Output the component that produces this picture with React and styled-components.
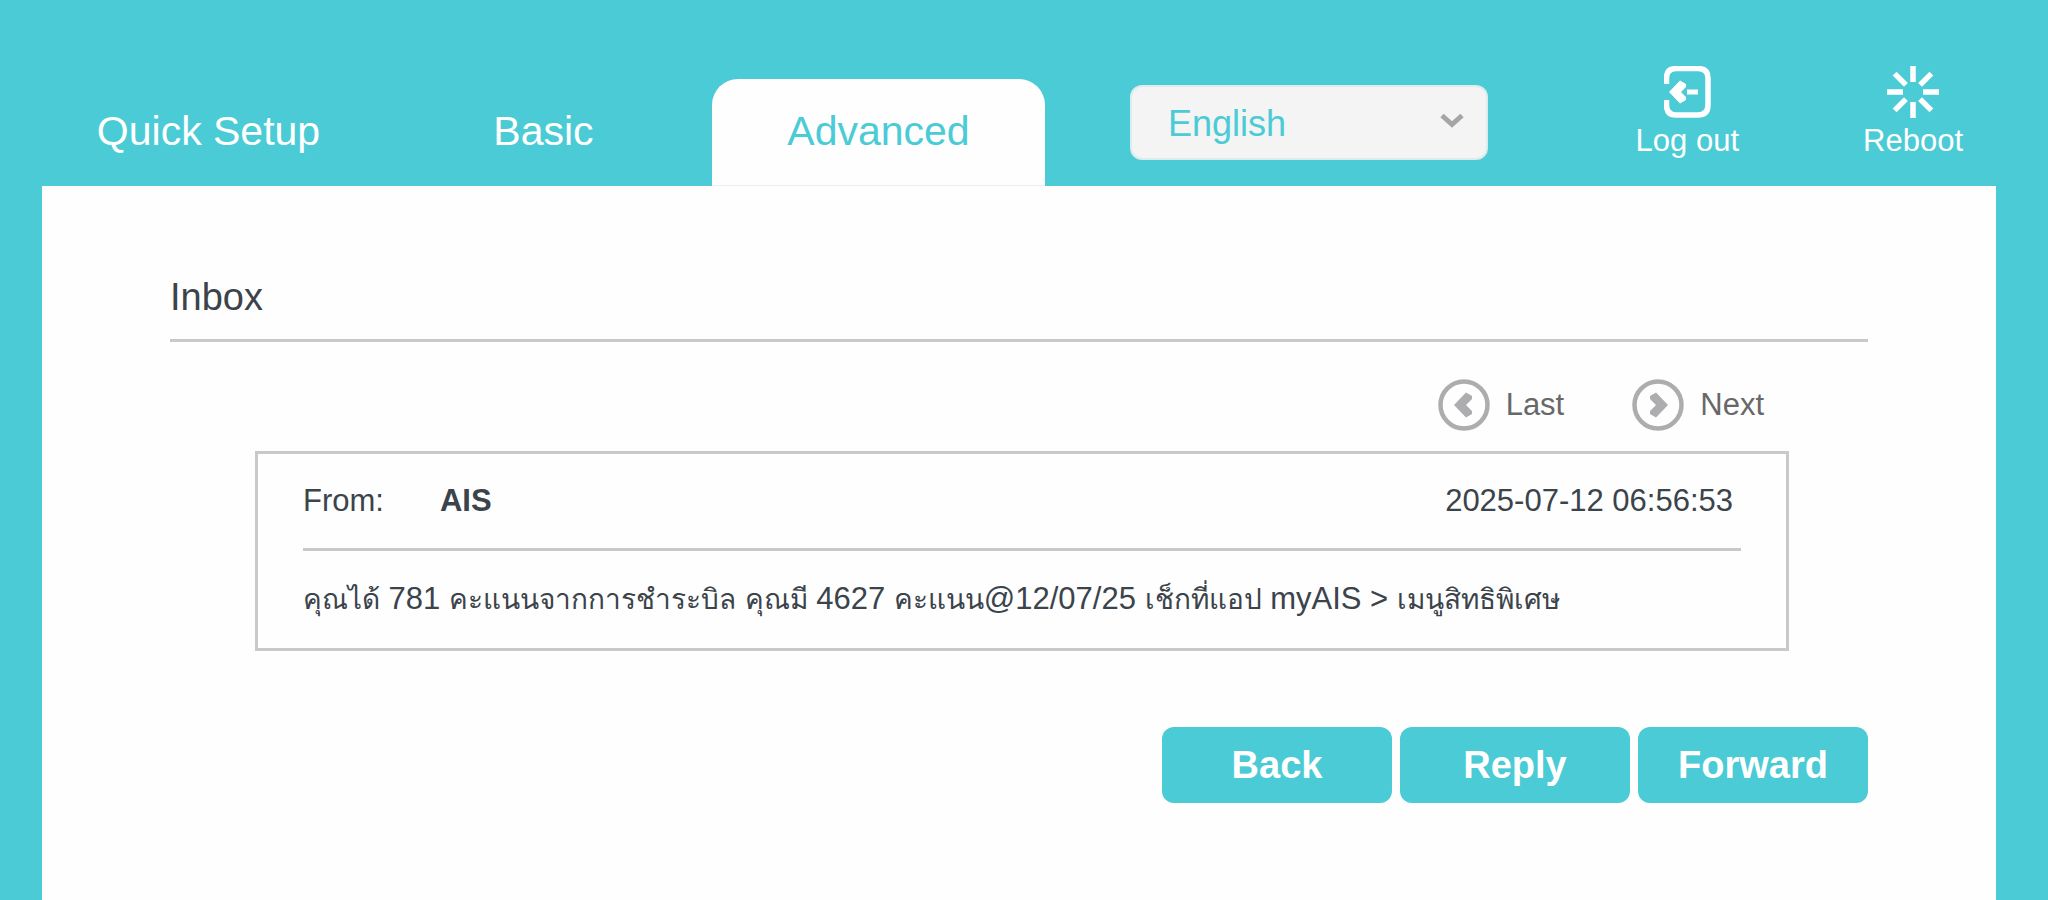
import { useState } from 'react'
import styled, { createGlobalStyle } from 'styled-components'

const colors = {
  primary: '#4bcbd5',
  panel: '#fefefe',
  text: '#3b434b',
  muted: '#68686a',
  line: '#c9c9ca',
  icon: '#adadb0',
}

const GlobalStyle = createGlobalStyle`
  * {
    box-sizing: border-box;
  }
  body {
    margin: 0;
    background: ${colors.primary};
    font-family: "Liberation Sans", Arial, sans-serif;
    color: ${colors.text};
  }
  button, select {
    font-family: inherit;
  }
`

const Page = styled.div`
  display: flex;
  flex-direction: column;
  min-height: 100vh;
  padding: 0 52px 0 42px;
`

const Header = styled.header`
  display: flex;
  align-items: flex-start;
`

const Tabs = styled.nav`
  display: flex;
  flex: 0 1 1003px;
  gap: 2px;
  padding-top: 79px;
`

const Tab = styled.a`
  flex: 1;
  height: 107px;
  padding-top: 29px;
  border-radius: 26px 26px 0 0;
  border-bottom: 1px solid ${({ $active }) => ($active ? '#e9eff0' : colors.primary)};
  background: ${({ $active }) => ($active ? colors.panel : 'transparent')};
  color: ${({ $active }) => ($active ? colors.primary : 'white')};
  font-size: 41px;
  line-height: 46px;
  text-align: center;
  text-decoration: none;
  white-space: nowrap;
`

const LanguageBox = styled.div`
  display: grid;
  flex: 0 1 358px;
  align-items: center;
  margin: 85px 0 0 85px;

  & > * {
    grid-area: 1 / 1;
  }
  & svg {
    justify-self: end;
    margin: 0 24px 4px 0;
    pointer-events: none;
  }
`

const LanguageSelect = styled.select`
  appearance: none;
  width: 100%;
  height: 75px;
  padding: 2px 60px 0 36px;
  border: 2px solid #dcebec;
  border-radius: 12px;
  background: #f4f4f4;
  color: ${colors.primary};
  font-size: 36px;
`

const Actions = styled.div`
  display: flex;
  gap: 124px;
  margin-left: auto;
  padding: 66px 33px 0 40px;
`

const Action = styled.button`
  display: flex;
  flex-direction: column;
  align-items: center;
  gap: 5px;
  padding: 0;
  border: none;
  background: none;
  color: white;
  font-size: 31px;
  line-height: 36px;
  white-space: nowrap;
  cursor: pointer;
`

const Panel = styled.main`
  flex: 1;
  padding: 89px 128px 60px;
  background: ${colors.panel};
`

const Title = styled.h1`
  margin: 0;
  padding-bottom: 20px;
  border-bottom: 3px solid ${colors.line};
  font-size: 38px;
  font-weight: normal;
  line-height: 44px;
`

const Pager = styled.div`
  display: flex;
  justify-content: flex-end;
  gap: 68px;
  margin: 37px 104px 20px 0;
`

const PagerButton = styled.button`
  display: flex;
  align-items: center;
  gap: 16px;
  padding: 0;
  border: none;
  background: none;
  color: ${colors.muted};
  font-size: 31px;
  line-height: 36px;
  cursor: pointer;
`

const Message = styled.article`
  margin: 0 79px 0 85px;
  padding: 0 45px;
  border: 3px solid ${colors.line};
  font-size: 31px;
`

const MessageHeader = styled.div`
  display: flex;
  align-items: center;
  height: 97px;
  padding-right: 8px;
  border-bottom: 3px solid ${colors.line};

  & strong {
    margin-left: 56px;
  }
  & time {
    margin-left: auto;
  }
`

const MessageText = styled.p`
  margin: 0;
  padding: 24px 0;
  line-height: 48px;
`

// Thai letters run wide next to the latin ones
const Thai = styled.span`
  font-size: 28px;
`

const Buttons = styled.div`
  display: flex;
  justify-content: flex-end;
  gap: 8px;
  margin-top: 76px;
`

const Button = styled.button`
  width: 230px;
  height: 76px;
  padding: 0;
  border: none;
  border-radius: 12px;
  background: ${colors.primary};
  color: white;
  font-size: 38px;
  font-weight: bold;
  cursor: pointer;
`

function LogoutIcon() {
  return (
    <svg width="47" height="52" viewBox="0 0 47 52" fill="none" stroke="white" aria-hidden="true">
      <path d="M2.500 18V12Q2.500 2.500 12 2.500H34Q44 2.500 44 12V39Q44 49 34 49H12Q2.500 49 2.500 39V34" strokeWidth="5.500" />
      <path d="M5 26L16 14.500L22 18V21L17 26L22 31V34L16 37.500Z" fill="white" stroke="none" />
      <path d="M23 26H34" strokeWidth="5" />
    </svg>
  )
}

function RebootIcon() {
  return (
    <svg width="52" height="52" viewBox="0 0 52 52" stroke="white" strokeWidth="5.500" aria-hidden="true">
      {[0, 45, 90, 135, 180, 225, 270, 315].map((angle) => (
        <line key={angle} x1="26" y1="0" x2="26" y2="16" transform={`rotate(${angle} 26 26)`} />
      ))}
    </svg>
  )
}

function ArrowIcon({ next }) {
  return (
    <svg width="52" height="52" viewBox="0 0 52 52" aria-hidden="true">
      <circle cx="26" cy="26" r="23.500" fill="none" stroke={colors.icon} strokeWidth="4.500" />
      <path
        d="M16 26L28 13.500L34 17V20L28 26L34 32V35L28 38.500Z"
        fill={colors.icon}
        transform={next ? 'rotate(180 26 26)' : undefined}
      />
    </svg>
  )
}

function ChevronIcon() {
  return (
    <svg width="24" height="16" viewBox="0 0 24 16" fill="none" stroke="#a5a5a5" strokeWidth="5" aria-hidden="true">
      <path d="M2 2.500L12 11.500L22 2.500" />
    </svg>
  )
}

const tabs = ['Quick Setup', 'Basic', 'Advanced']

const message =
  'คุณได้ 781 คะแนนจากการชำระบิล คุณมี 4627 คะแนน@12/07/25 เช็กที่แอป myAIS > เมนูสิทธิพิเศษ'

function App() {
  const [activeTab, setActiveTab] = useState('Advanced')

  return (
    <Page>
      <GlobalStyle />
      <Header>
        <Tabs>
          {tabs.map((tab) => (
            <Tab key={tab} href="#" $active={tab === activeTab} onClick={() => setActiveTab(tab)}>
              {tab}
            </Tab>
          ))}
        </Tabs>
        <LanguageBox>
          <LanguageSelect aria-label="Language" defaultValue="en">
            <option value="en">English</option>
          </LanguageSelect>
          <ChevronIcon />
        </LanguageBox>
        <Actions>
          <Action type="button">
            <LogoutIcon />
            Log out
          </Action>
          <Action type="button">
            <RebootIcon />
            Reboot
          </Action>
        </Actions>
      </Header>
      <Panel>
        <Title>Inbox</Title>
        <Pager>
          <PagerButton type="button">
            <ArrowIcon />
            Last
          </PagerButton>
          <PagerButton type="button">
            <ArrowIcon next />
            Next
          </PagerButton>
        </Pager>
        <Message>
          <MessageHeader>
            <span>From:</span>
            <strong>AIS</strong>
            <time dateTime="2025-07-12T06:56:53">2025-07-12 06:56:53</time>
          </MessageHeader>
          <MessageText>
            {message
              .split(/([\u0E00-\u0E7F]+)/)
              .map((part, i) => (i % 2 ? <Thai key={i} lang="th">{part}</Thai> : part))}
          </MessageText>
        </Message>
        <Buttons>
          <Button type="button">Back</Button>
          <Button type="button">Reply</Button>
          <Button type="button">Forward</Button>
        </Buttons>
      </Panel>
    </Page>
  )
}

export default App
